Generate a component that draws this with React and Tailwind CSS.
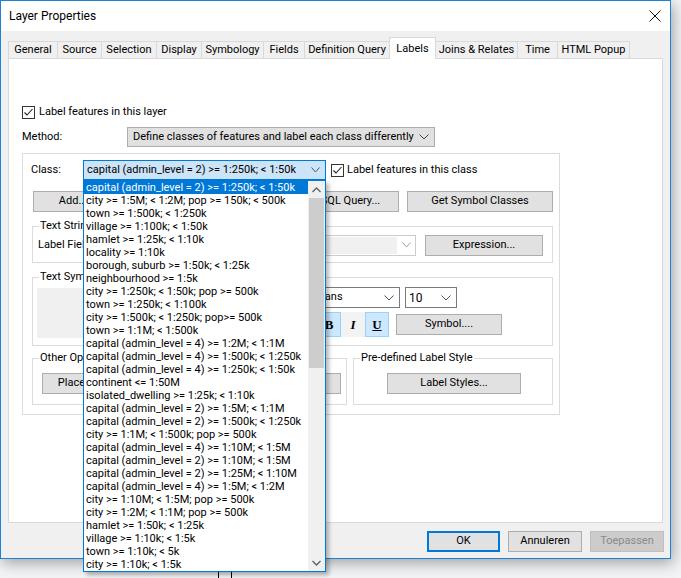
import React from 'react';

const classes = [
  'capital (admin_level = 2) >= 1:250k; < 1:50k',
  'city >= 1:5M; < 1:2M; pop >= 150k; < 500k',
  'town >= 1:500k; < 1:250k',
  'village >= 1:100k; < 1:50k',
  'hamlet >= 1:25k; < 1:10k',
  'locality >= 1:10k',
  'borough, suburb >= 1:50k; < 1:25k',
  'neighbourhood >= 1:5k',
  'city >= 1:250k; < 1:50k; pop >= 500k',
  'town >= 1:250k; < 1:100k',
  'city >= 1:500k; < 1:250k; pop>= 500k',
  'town >= 1:1M; < 1:500k',
  'capital (admin_level = 4) >= 1:2M; < 1:1M',
  'capital (admin_level = 4) >= 1:500k; < 1:250k',
  'capital (admin_level = 4) >= 1:250k; < 1:50k',
  'continent <= 1:50M',
  'isolated_dwelling >= 1:25k; < 1:10k',
  'capital (admin_level = 2) >= 1:5M; < 1:1M',
  'capital (admin_level = 2) >= 1:500k; < 1:250k',
  'city >= 1:1M; < 1:500k; pop >= 500k',
  'capital (admin_level = 4) >= 1:10M; < 1:5M',
  'capital (admin_level = 2) >= 1:10M; < 1:5M',
  'capital (admin_level = 2) >= 1:25M; < 1:10M',
  'capital (admin_level = 4) >= 1:5M; < 1:2M',
  'city >= 1:10M; < 1:5M; pop >= 500k',
  'city >= 1:2M; < 1:1M; pop >= 500k',
  'hamlet >= 1:50k; < 1:25k',
  'village >= 1:10k; < 1:5k',
  'town >= 1:10k; < 5k',
  'city >= 1:10k; < 1:5k',
];

const tabs = [
  ['General', 'w-[50px]'],
  ['Source', 'w-[45px]'],
  ['Selection', 'w-[56px]'],
  ['Display', 'w-[46px]'],
  ['Symbology', 'w-[63px]'],
  ['Fields', 'w-[42px]'],
  ['Definition Query', 'w-[86px]'],
  ['Labels', 'w-[47px]'],
  ['Joins & Relates', 'w-[83px]'],
  ['Time', 'w-[41px]'],
  ['HTML Popup', 'w-[73px]'],
];

const Chevron = ({ color = '#444', w = 10 }) => (
  <svg width={w} height="6" viewBox={`0 0 ${w} 6`} className="shrink-0">
    <path d={`M0.5 0.5 L${w / 2} 5 L${w - 0.5} 0.5`} fill="none" stroke={color} strokeWidth="1" />
  </svg>
);

const Checkbox = () => (
  <div className="w-[13px] h-[13px] border border-[#333] bg-white flex items-center justify-center shrink-0">
    <svg width="11" height="11" viewBox="0 0 11 11">
      <path d="M1.5 5.5 L4 8 L9.5 2" fill="none" stroke="#222" strokeWidth="1.1" />
    </svg>
  </div>
);

const Btn = ({ children, className = '' }) => (
  <div className={`flex items-center justify-center bg-[#e1e1e1] border border-[#adadad] shrink-0 whitespace-nowrap overflow-hidden ${className}`}>
    {children}
  </div>
);

// win32 style group box, caption sits over the top border
const Group = ({ title, className = '', children }) => (
  <div className={`relative border border-[#dcdcdc] shrink-0 ${className}`}>
    {title && (
      <span className="absolute left-[6px] -top-[8px] bg-white px-[1px] leading-[14px] whitespace-nowrap">{title}</span>
    )}
    {children}
  </div>
);

const ClassList = () => (
  <div className="absolute top-[20px] left-0 w-[243px] h-[392px] z-20 flex bg-white border border-[#0078d7] shadow-[3px_3px_4px_rgba(0,0,0,0.28)]">
    <div className="flex-1 flex flex-col overflow-hidden">
      {classes.map((c, i) => (
        <div
          key={i}
          className={`h-[13px] leading-[13px] pl-[2px] whitespace-nowrap shrink-0 ${i === 0 ? 'bg-[#0078d7] text-white' : 'text-black'}`}
        >
          {c}
        </div>
      ))}
    </div>
    <div className="w-[17px] bg-[#f0f0f0] flex flex-col items-center">
      <div className="h-[17px] w-full flex items-center justify-center">
        <svg width="9" height="6" viewBox="0 0 9 6">
          <path d="M0.5 5 L4.5 1 L8.5 5" fill="none" stroke="#606060" strokeWidth="1.3" />
        </svg>
      </div>
      <div className="w-[15px] h-[170px] bg-[#cdcdcd]" />
      <div className="flex-1" />
      <div className="h-[17px] w-full flex items-center justify-center">
        <svg width="9" height="6" viewBox="0 0 9 6">
          <path d="M0.5 1 L4.5 5 L8.5 1" fill="none" stroke="#606060" strokeWidth="1.3" />
        </svg>
      </div>
    </div>
  </div>
);

const App = () => {
  return (
    <div className="relative w-[681px] h-[578px] overflow-hidden bg-[#f3f4f6] font-['Roboto',Arial,sans-serif] text-[11px] text-black">
      {/* dialog window */}
      <div className="relative w-[671px] h-[559px] border border-[#1883d7] bg-[#f0f0f0] flex flex-col shadow-[2px_4px_14px_rgba(0,0,0,0.35)]">
        {/* title bar */}
        <div className="h-[30px] bg-white flex items-center justify-between pl-[8px] pr-[9px] shrink-0">
          <span className="text-[12px]">Layer Properties</span>
          <svg width="12" height="12" viewBox="0 0 12 12">
            <path d="M0.5 0.5 L11.5 11.5 M11.5 0.5 L0.5 11.5" stroke="#111" strokeWidth="1" />
          </svg>
        </div>

        {/* tabs */}
        <div className="h-[27px] pt-[6px] pl-[8px] flex items-end shrink-0">
          {tabs.map(([t, w]) =>
            t === 'Labels' ? (
              <div key={t} className={`${w} h-[22px] -mb-px -ml-px relative z-10 bg-white border border-b-0 border-[#d9d9d9] flex items-start justify-center pt-[3px]`}>
                {t}
              </div>
            ) : (
              <div key={t} className={`${w} h-[17px] -ml-px border border-b-0 border-[#d9d9d9] bg-[#f0f0f0] flex items-center justify-center whitespace-nowrap`}>
                {t}
              </div>
            )
          )}
        </div>

        {/* tab page */}
        <div className="ml-[7px] w-[655px] h-[465px] bg-white border border-[#d9d9d9] shrink-0 flex flex-col pl-[13px]">
          <div className="mt-[47px] flex items-center h-[13px]">
            <Checkbox />
            <span className="ml-[4px]">Label features in this layer</span>
          </div>

          <div className="mt-[8px] flex items-center h-[20px]">
            <span className="w-[105px]">Method:</span>
            <div className="w-[308px] h-[20px] bg-[#e1e1e1] border border-[#adadad] flex items-center justify-between pl-[5px] pr-[5px]">
              <span className="whitespace-nowrap">Define classes of features and label each class differently</span>
              <Chevron />
            </div>
          </div>

          {/* class box */}
          <Group className="mt-[6px] w-[538px] h-[262px] pt-[6px] pl-[8px] flex flex-col">
            <div className="flex items-center h-[20px]">
              <span className="w-[52px]">Class:</span>
              <div className="relative w-[243px] h-[20px]">
                <div className="w-full h-full bg-[#cce4f7] border border-[#0078d7] flex items-center justify-between pl-[3px] pr-[5px]">
                  <span className="whitespace-nowrap">{classes[0]}</span>
                  <Chevron color="#555" w={9} />
                </div>
                <ClassList />
              </div>
              <div className="ml-[5px]">
                <Checkbox />
              </div>
              <span className="ml-[3px]">Label features in this class</span>
            </div>

            <div className="mt-[11px] flex items-center h-[21px] pl-[2px]">
              <Btn className="w-[80px] h-[21px]">Add...</Btn>
              <Btn className="w-[80px] h-[21px] ml-[8px]">Delete</Btn>
              <Btn className="w-[85px] h-[21px] ml-[8px]">Rename...</Btn>
              <Btn className="w-[97px] h-[21px] ml-[8px]">SQL Query...</Btn>
              <Btn className="w-[146px] h-[21px] ml-[8px]">Get Symbol Classes</Btn>
            </div>

            <Group title="Text String" className="mt-[14px] ml-[1px] w-[521px] h-[37px] flex items-center pl-[5px] pt-[1px]">
              <span className="w-[67px]">Label Field:</span>
              <div className="w-[311px] h-[21px] border border-[#cccccc] bg-white flex items-center">
                <div className="w-[290px] h-[17px] ml-[1px] bg-[#f0f0f0]" />
                <div className="flex-1 flex justify-center">
                  <Chevron color="#a0a0a0" w={9} />
                </div>
              </div>
              <Btn className="w-[118px] h-[21px] ml-[9px]">Expression...</Btn>
            </Group>

            <Group title="Text Symbol" className="mt-[14px] ml-[1px] w-[521px] h-[69px] flex pl-[4px]">
              <div className="mt-[10px] w-[222px] h-[50px] bg-[#f0f0f0]" />
              <div className="ml-[10px] mt-[9px] flex flex-col">
                <div className="flex items-center">
                  <div className="w-[131px] h-[21px] bg-white border border-[#7a7a7a] flex items-center justify-between pl-[3px] pr-[5px]">
                    <span className="ml-[8px]">DejaVu Sans</span>
                    <Chevron color="#555" />
                  </div>
                  <div className="w-[52px] h-[21px] ml-[5px] bg-white border border-[#7a7a7a] flex items-center justify-between pl-[3px] pr-[5px]">
                    <span className="text-[12px]">10</span>
                    <Chevron color="#555" />
                  </div>
                </div>
                <div className="mt-[4px] flex items-center">
                  <div className="w-[40px] h-[21px] border border-[#adadad] bg-[#e1e1e1] flex items-center justify-center">
                    <div className="w-[22px] h-[12px] bg-black" />
                  </div>
                  <div className="ml-[8px] w-[24px] h-[25px] bg-[#cce8ff] border border-[#99d1ff] flex items-center justify-center font-['Liberation_Serif',serif] font-bold text-[13px]">B</div>
                  <div className="w-[24px] h-[25px] bg-[#f3f3f3] flex items-center justify-center font-['Liberation_Serif',serif] font-bold italic text-[13px]">I</div>
                  <div className="w-[24px] h-[25px] bg-[#cce8ff] border border-[#99d1ff] flex items-center justify-center font-['Liberation_Serif',serif] font-bold underline text-[13px]">U</div>
                  <Btn className="w-[106px] h-[21px] ml-[7px]">Symbol....</Btn>
                </div>
              </div>
            </Group>

            <div className="mt-[12px] ml-[1px] flex">
              <Group title="Other Options" className="w-[315px] h-[47px] flex items-start pt-[14px] pl-[9px]">
                <Btn className="w-[146px] h-[21px]">Placement Properties...</Btn>
                <Btn className="w-[146px] h-[21px] ml-[7px]">Scale Range...</Btn>
              </Group>
              <Group title="Pre-defined Label Style" className="ml-[6px] w-[200px] h-[47px] flex justify-center items-start pt-[14px] pl-[2px]">
                <Btn className="w-[134px] h-[21px]">Label Styles...</Btn>
              </Group>
            </div>
          </Group>
        </div>

        {/* dialog buttons */}
        <div className="mt-[8px] flex justify-end gap-[8px] pr-[6px]">
          <div className="w-[73px] h-[21px] border-2 border-[#0078d7] bg-[#e1e1e1] flex items-center justify-center">OK</div>
          <Btn className="w-[74px] h-[21px]">Annuleren</Btn>
          <div className="w-[74px] h-[21px] border border-[#bfbfbf] bg-[#cccccc] text-[#8a8a8a] flex items-center justify-center">Toepassen</div>
        </div>
      </div>

      {/* bits of the desktop behind the dialog */}
      <div className="absolute left-[218px] top-[572px] w-px h-[6px] bg-black" />
      <div className="absolute left-[231px] top-[572px] w-px h-[6px] bg-black" />
    </div>
  );
};

export default App;
